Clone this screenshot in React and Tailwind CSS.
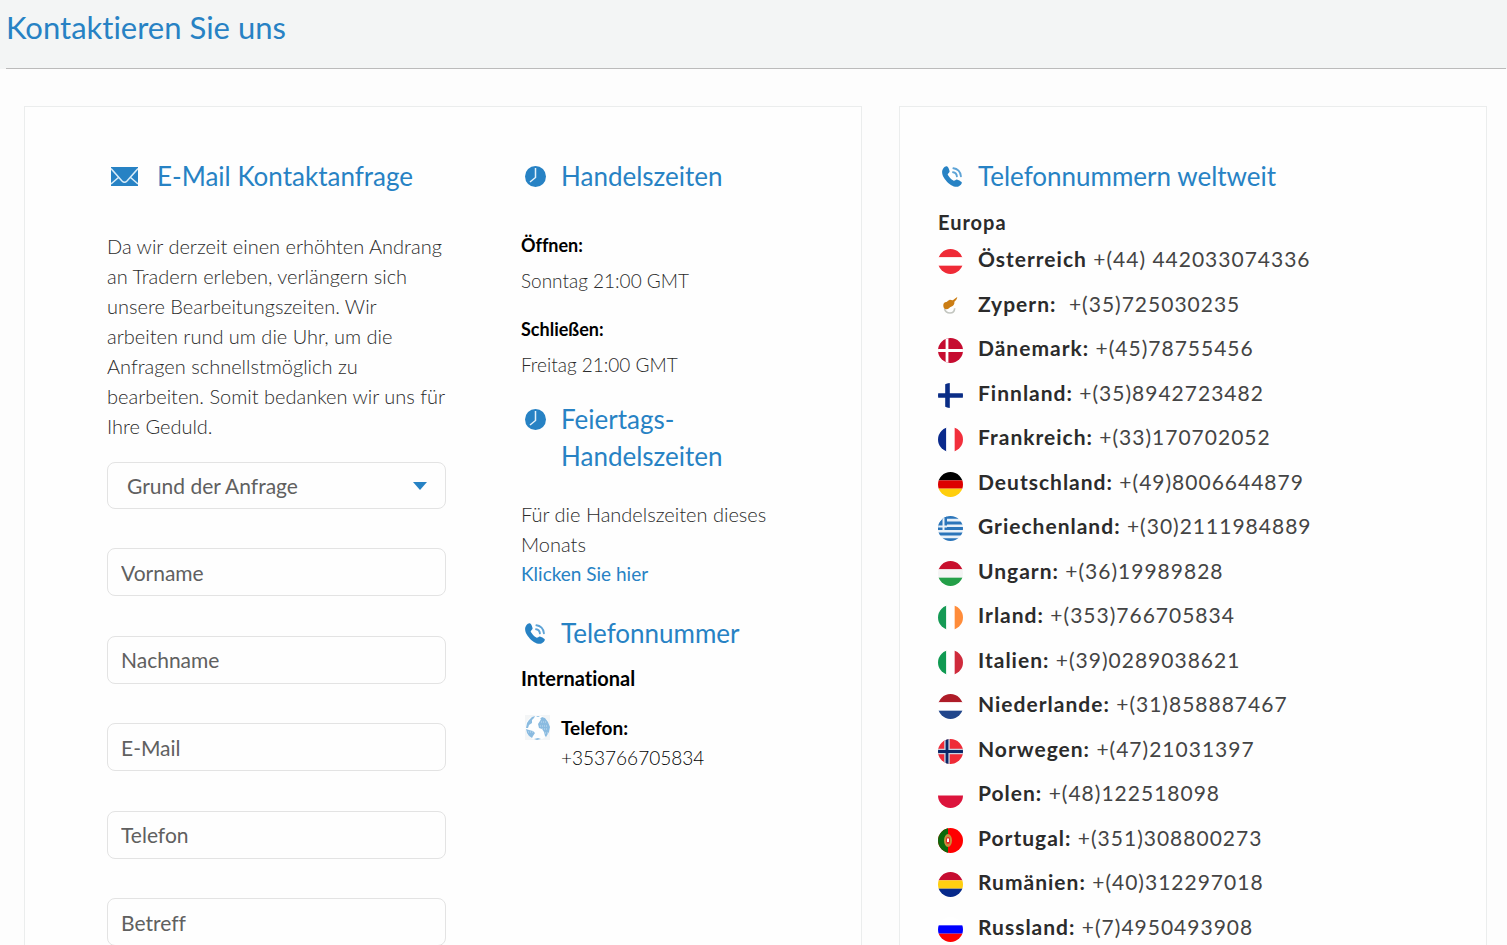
import React, { useState } from "react";

const fields = [
  { id: "firstname", label: "Vorname", type: "text" },
  { id: "lastname", label: "Nachname", type: "text" },
  { id: "email", label: "E-Mail", type: "email" },
  { id: "phone", label: "Telefon", type: "tel" },
  { id: "subject", label: "Betreff", type: "text" },
];

const countries = [
  { name: "Österreich", phone: "+(44) 442033074336", flag: "at" },
  { name: "Zypern:\u00a0", phone: "+(35)725030235", flag: "cy" },
  { name: "Dänemark:", phone: "+(45)78755456", flag: "dk" },
  { name: "Finnland:", phone: "+(35)8942723482", flag: "fi" },
  { name: "Frankreich:", phone: "+(33)170702052", flag: "fr" },
  { name: "Deutschland:", phone: "+(49)8006644879", flag: "de" },
  { name: "Griechenland:", phone: "+(30)2111984889", flag: "gr" },
  { name: "Ungarn:", phone: "+(36)19989828", flag: "hu" },
  { name: "Irland:", phone: "+(353)766705834", flag: "ie" },
  { name: "Italien:", phone: "+(39)0289038621", flag: "it" },
  { name: "Niederlande:", phone: "+(31)858887467", flag: "nl" },
  { name: "Norwegen:", phone: "+(47)21031397", flag: "no" },
  { name: "Polen:", phone: "+(48)122518098", flag: "pl" },
  { name: "Portugal:", phone: "+(351)308800273", flag: "pt" },
  { name: "Rumänien:", phone: "+(40)312297018", flag: "ro" },
  { name: "Russland:", phone: "+(7)4950493908", flag: "ru" },
];

// Three equal bands, top to bottom or left to right
const bands = {
  at: { colors: ["#ef2b37", "#ffffff", "#ef2b37"] },
  fr: { colors: ["#0a2a8c", "#ffffff", "#f22f3c"], vertical: true },
  de: { colors: ["#000000", "#dd0000", "#ffce0c"] },
  hu: { colors: ["#c8102e", "#f4f4f4", "#249f48"] },
  ie: { colors: ["#159a55", "#ffffff", "#ff8c3a"], vertical: true },
  it: { colors: ["#109a52", "#ffffff", "#cf2b3c"], vertical: true },
  nl: { colors: ["#ae1c28", "#ffffff", "#21468b"] },
  ro: { colors: ["#c60c30", "#ffcf10", "#06298a"] },
  ru: { colors: ["#ffffff", "#0000ff", "#ff0000"] },
};

function FlagArt({ code }) {
  switch (code) {
    case "cy":
      return (
        <>
          <path
            d="M6.500 14.500c.6 2.800 2.600 4.500 5.500 4.500 2.700 0 4.500-1.800 4.700-4.800"
            fill="none"
            stroke="#c3c6c0"
            strokeWidth="1.600"
          />
          <path
            d="M5.300 11.500c-.1-2 1.200-3.200 2.900-3.400 1.300-.2 1.500-2 3.300-2.200 1.500-.2 2.300.6 3.700.1 1.400-.6 2.400-1.900 4.100-2.900-.3 2.200-1.500 3.400-2.900 4.600.3 2.600-1.200 4.500-3.300 5-1.500.5-2.500 2.500-4.600 2.500-2.200 0-3.200-1.500-3.200-3.700z"
            fill="#cb7d14"
          />
        </>
      );
    case "dk":
      return (
        <>
          <rect width="25" height="25" fill="#c60c30" />
          <path d="M9 0v25M0 12.500h25" stroke="#fff" strokeWidth="2.800" />
        </>
      );
    case "fi":
      return <path d="M9.500 0v25M0 12.500h25" stroke="#0a2d86" strokeWidth="4.600" />;
    case "gr":
      return (
        <>
          <rect width="25" height="25" fill="#e9f1f8" />
          <path
            d="M0 1.400h25M0 7h25M0 12.500h25M0 18h25M0 23.600h25"
            stroke="#2b75ba"
            strokeWidth="2.800"
          />
          <rect width="9" height="14" fill="#2b75ba" />
          <path d="M5.500 0v14M0 10.500h9" stroke="#e9f1f8" strokeWidth="2" />
        </>
      );
    case "no":
      return (
        <>
          <rect width="25" height="25" fill="#ef2b37" />
          <path d="M9 0v25M0 12.500h25" stroke="#c9d3e2" strokeWidth="5.500" />
          <path d="M9 0v25M0 12.500h25" stroke="#0a2868" strokeWidth="2.800" />
        </>
      );
    case "pt":
      return (
        <>
          <rect width="25" height="25" fill="#ff0000" />
          <rect width="10" height="25" fill="#0b6a0b" />
          <ellipse cx="10" cy="12.500" rx="4" ry="6.500" fill="#c98f3c" />
          <rect x="8" y="9" width="4" height="7" rx="2" fill="#e02a2a" />
          <rect x="9" y="10.500" width="2" height="3.500" fill="#fff" />
        </>
      );
    case "pl":
      return <rect y="12.500" width="25" height="12.500" fill="#dc143c" />;
    default: {
      const { colors, vertical } = bands[code];
      return colors.map((color, i) => (
        <rect
          key={i}
          x={vertical ? (i * 25) / 3 : 0}
          y={vertical ? 0 : (i * 25) / 3}
          width={vertical ? 25 / 3 : 25}
          height={vertical ? 25 : 25 / 3}
          fill={color}
        />
      ));
    }
  }
}

function Flag({ code }) {
  return (
    <svg viewBox="0 0 25 25" className="size-[25px] shrink-0 self-end" aria-hidden="true">
      <clipPath id={`flag-${code}`}>
        <circle cx="12.500" cy="12.500" r="12.500" />
      </clipPath>
      <g clipPath={`url(#flag-${code})`}>
        <FlagArt code={code} />
      </g>
    </svg>
  );
}

function MailIcon() {
  return (
    <svg viewBox="0 0 27 19" className="h-[19px] w-[27px]" aria-hidden="true">
      <rect width="27" height="19" fill="#2782c4" />
      <path
        d="M0 1.500 11 14q2.500 2.500 5 0L27 1.500M0 17l8-7M27 17l-8-7"
        fill="none"
        stroke="#d9ecf8"
        strokeWidth="1.500"
      />
    </svg>
  );
}

function ClockIcon() {
  return (
    <svg viewBox="0 0 21 21" className="size-[21px]" aria-hidden="true">
      <circle cx="10.500" cy="10.500" r="10.500" fill="#2782c4" />
      <path d="M10.500 2v9.500L5 16" fill="none" stroke="#e3f1fa" strokeWidth="1.500" />
    </svg>
  );
}

function PhoneIcon() {
  return (
    <svg viewBox="0 0 21 21" className="size-[21px]" aria-hidden="true">
      <path
        d="M1.200 2.400C2.500.8 4.200-.2 5.300.5c1 .8 2 3.300 2.300 4.700.2 1.400-1.800 1.900-1.900 3.100 0 1.500 4.400 6.100 6 6.400 1.300.2 1.900-1.500 3.200-1.300 1.400.3 3.900 1.700 4.700 2.700.8 1.200-1 3.200-2.700 4.100-1.900 1-5 .6-8-1.300C5.300 16.700 1.700 12.300.500 8.700-.1 6.400-.2 4.200 1.200 2.400z"
        fill="#2782c4"
      />
      <path
        d="M11 6.200c2 .2 3.700 1.800 3.900 4.200M11.400 2.300c4 .3 7.200 3.500 7.500 7.900"
        fill="none"
        stroke="#5da3d6"
        strokeWidth="1.900"
        strokeLinecap="round"
      />
    </svg>
  );
}

function GlobeIcon() {
  return (
    <svg viewBox="0 0 25 25" className="size-[25px]" aria-hidden="true">
      <rect width="25" height="25" fill="#f3f5f6" />
      <circle cx="12.500" cy="12.500" r="12.200" fill="#fdfefe" />
      <g fill="#8abbe0">
        <path d="M4 5l3-3 3-1-1 2-2 2 0 3-3 2-1 3-2 0 1-5z" />
        <path d="M1 14l3 1 4 1 2 2-2 3-1 2-3-2-2-3z" />
        <path d="M15 4l2-2 3 1 3 4 2 5-1 5-3 5-1-1-1-4-2-3-3-1-1-4 2-3 1-2z" />
        <path d="M11 1l4 0-2 1zM9 24l4-1 3 1-4 1z" />
      </g>
      <path
        d="M16 7h5M15 11h8M17 14h6M3 17h5M20 18h3"
        stroke="#c3dcef"
        strokeDasharray="1 1"
      />
    </svg>
  );
}

function SectionHeading({ icon, wide, children }) {
  return (
    <h2 className="flex text-[26px] leading-[37px] text-[#2782c4]">
      <span
        className={
          wide
            ? "flex h-[37px] w-[50px] shrink-0 items-center pl-1"
            : "flex h-[37px] w-10 shrink-0 items-center pl-1"
        }
      >
        {icon}
      </span>
      <span>{children}</span>
    </h2>
  );
}

function ContactForm() {
  const [values, setValues] = useState({});

  const handleChange = (e) => {
    setValues({ ...values, [e.target.name]: e.target.value });
  };

  return (
    <form className="mt-[21px]">
      <div className="relative">
        <select
          aria-label="Grund der Anfrage"
          className="h-[47px] w-full appearance-none rounded-lg border border-[#e3e3e3] bg-[#fefefe] px-[19px] text-[21px] text-[#606060]"
        >
          <option>Grund der Anfrage</option>
        </select>
        <svg
          viewBox="0 0 14 8"
          className="pointer-events-none absolute top-5 right-[19px] h-2 w-3.5"
          aria-hidden="true"
        >
          <path d="M0 0h14L7 8z" fill="#2782c4" />
        </svg>
      </div>

      <div className="mt-[39px] flex h-[398px] flex-col justify-between">
        {fields.map((field) => (
          <input
            key={field.id}
            name={field.id}
            type={field.type}
            aria-label={field.label}
            placeholder={field.label}
            value={values[field.id] || ""}
            onChange={handleChange}
            className="h-12 w-full rounded-lg border border-[#e3e3e3] bg-[#fefefe] px-[13px] text-[21px] text-[#606060] placeholder:text-[#606060]"
          />
        ))}
      </div>
    </form>
  );
}

function App() {
  return (
    <div className="min-h-screen bg-[#fdfdfd] pb-10 font-['Lato',sans-serif] text-[19px] leading-[30px] text-[#2b2b2b] [font-variant-ligatures:none]">
      {/* Page title */}
      <header className="bg-[#f3f5f5] pr-px pl-1.5">
        <h1 className="border-b border-[#bbb] pt-[5px] pb-[19px] text-[31px] leading-[44px] text-[#2782c4]">
          Kontaktieren Sie uns
        </h1>
      </header>

      <main className="grid grid-cols-[838fr_588fr] gap-[37px] pt-[37px] pr-5 pl-6">
        {/* Contact form and trading hours */}
        <section className="grid grid-cols-[339fr_258fr] gap-[75px] border border-[#ebeded] bg-[#fefefe] px-[82px] pt-[51px] pb-10">
          <div>
            <SectionHeading icon={<MailIcon />} wide>
              E-Mail Kontaktanfrage
            </SectionHeading>
            <p className="mt-9 text-[20px] leading-[30px] font-light">
              Da wir derzeit einen erhöhten Andrang an Tradern erleben, verlängern
              sich unsere Bearbeitungszeiten. Wir arbeiten rund um die Uhr, um die
              Anfragen schnellstmöglich zu bearbeiten. Somit bedanken wir uns für
              Ihre Geduld.
            </p>
            <ContactForm />
          </div>

          <div>
            <SectionHeading icon={<ClockIcon />}>Handelszeiten</SectionHeading>
            <dl className="mt-[35px]">
              <dt className="text-[18px] font-bold text-black">Öffnen:</dt>
              <dd className="mt-1.5 font-light">Sonntag 21:00 GMT</dd>
              <dt className="mt-[18px] text-[18px] font-bold text-black">Schließen:</dt>
              <dd className="mt-1.5 font-light">Freitag 21:00 GMT</dd>
            </dl>

            <div className="mt-[21px]">
              <SectionHeading icon={<ClockIcon />}>
                Feiertags-Handelszeiten
              </SectionHeading>
            </div>
            <p className="mt-6 text-[20px] leading-[30px] font-light">
              Für die Handelszeiten dieses Monats
            </p>
            <a href="#" className="block text-[#2782c4]">
              Klicken Sie hier
            </a>

            <div className="mt-[26px]">
              <SectionHeading icon={<PhoneIcon />}>Telefonnummer</SectionHeading>
            </div>
            <h3 className="mt-[11px] text-[20px] leading-[30px] font-bold text-black">
              International
            </h3>
            <div className="mt-5 flex">
              <span className="w-10 shrink-0 pt-0.5 pl-1">
                <GlobeIcon />
              </span>
              <p className="text-black">
                <strong className="block font-bold">Telefon:</strong>
                <span className="font-light">+353766705834</span>
              </p>
            </div>
          </div>
        </section>

        {/* Worldwide phone numbers */}
        <section className="border border-[#ebeded] bg-[#fefefe] px-[38px] pt-[51px] pb-10">
          <SectionHeading icon={<PhoneIcon />}>Telefonnummern weltweit</SectionHeading>
          <h3 className="mt-3 text-[20px] leading-[30px] font-bold tracking-[1px]">
            Europa
          </h3>
          <ul className="mt-[7px] flex h-[698px] flex-col justify-between text-[21px] leading-[30px] tracking-[1px]">
            {countries.map((country) => (
              <li key={country.flag} className="flex h-[30px] gap-[15px]">
                <Flag code={country.flag} />
                <span>
                  <strong className="font-bold">{country.name}</strong>{" "}
                  <span className="text-[#444]">{country.phone}</span>
                </span>
              </li>
            ))}
          </ul>
        </section>
      </main>
    </div>
  );
}

export default App;
